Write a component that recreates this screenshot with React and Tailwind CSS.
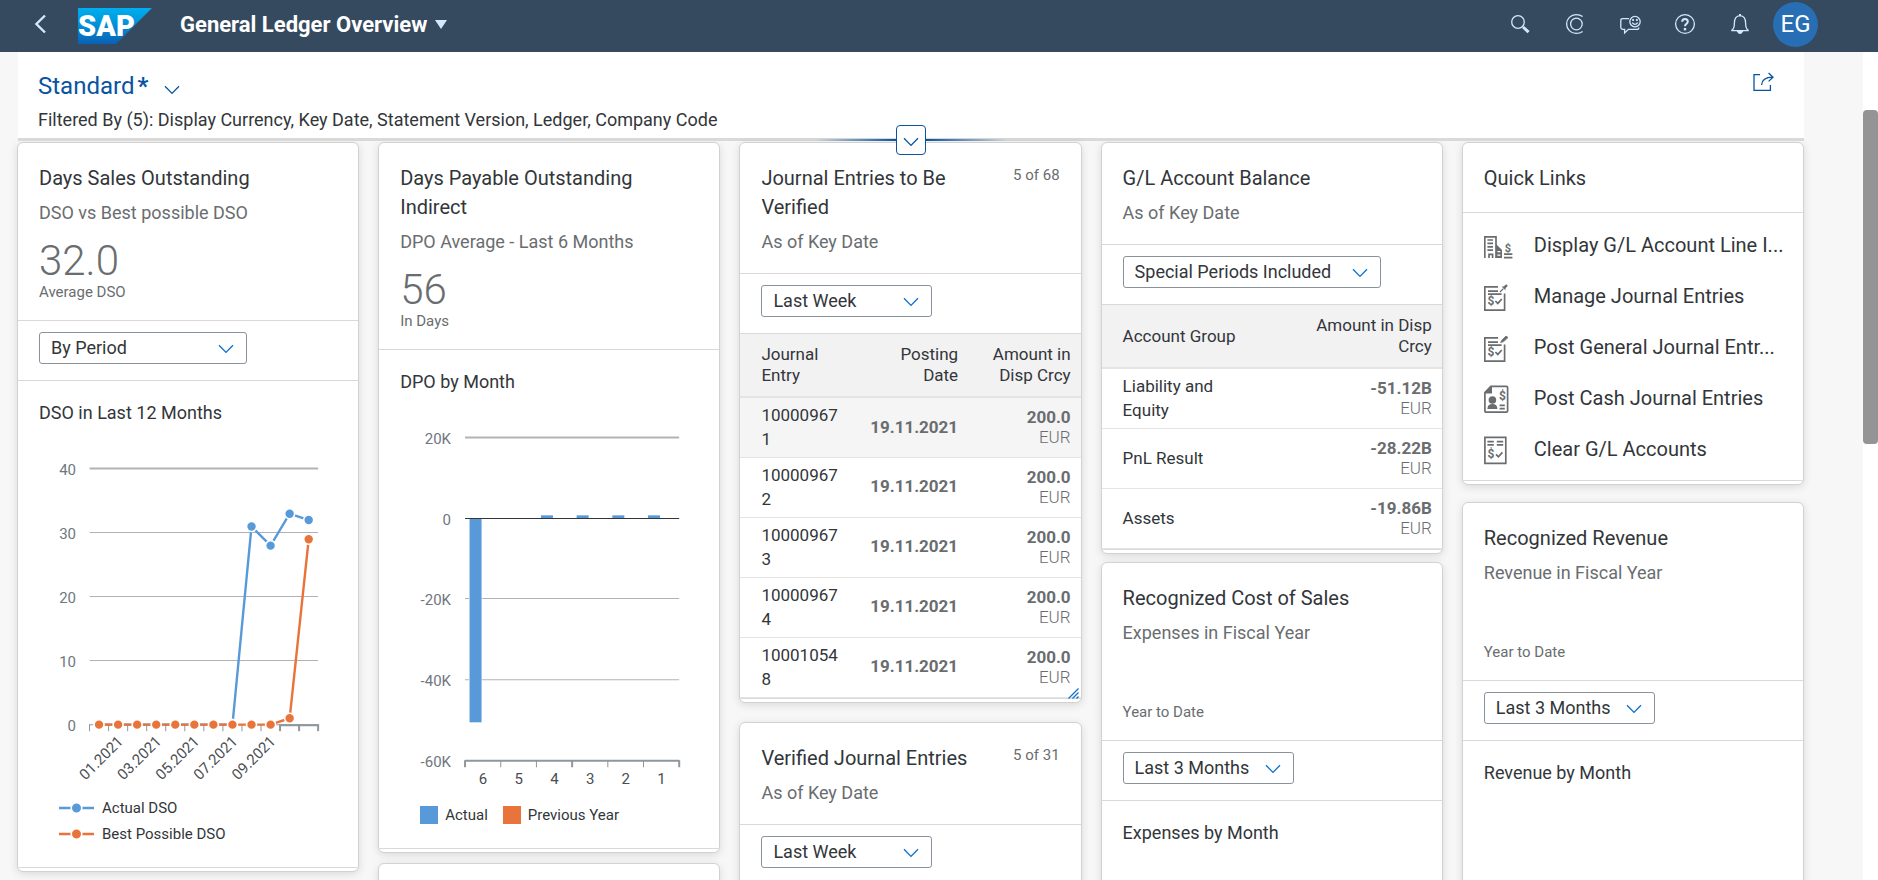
import React from 'react';

const BLUE = "#5899DA";
const ORANGE = "#E8743B";

const Chevron = ({ className }) => (
    <svg viewBox="0 0 16 10" className={className} fill="none" stroke="currentColor" strokeWidth="1.3" aria-hidden="true">
        <path d="M1 1.2 8 8.4 15 1.2" />
    </svg>
);

// --- Shell bar ---
const SapLogo = () => (
    <svg width="74" height="36" viewBox="0 0 74 36" role="img" aria-label="SAP">
        <defs>
            <linearGradient id="sapBlue" x1="0" y1="0" x2="0" y2="1">
                <stop offset="0" stopColor="#00AEEF" />
                <stop offset="0.4" stopColor="#0096DC" />
                <stop offset="1" stopColor="#0A60B4" />
            </linearGradient>
        </defs>
        <path d="M0 0H74L38 36H0Z" fill="url(#sapBlue)" />
        <text x="0" y="28" fontFamily="Roboto, sans-serif" fontWeight="900" fontSize="29" fill="#fff">SAP</text>
    </svg>
);

const shellIcons = [
    {
        label: "Search",
        drawing: (
            <>
                <circle cx="8" cy="8" r="6.3" />
                <path d="M13 13 18.6 18.2" strokeWidth="3" />
            </>
        ),
    },
    {
        label: "CoPilot",
        drawing: (
            <>
                <path d="M17.6 2.6C15.6 1 13.4.6 11 .6A9.4 9.4 0 0 0 11 19.4C13.4 19.4 15.6 19 17.6 17.4" />
                <circle cx="11.4" cy="10" r="5.8" />
            </>
        ),
    },
    {
        label: "Feedback",
        drawing: (
            <>
                <path d="M9 4.6H2.6Q.8 4.6.8 6.4V13.6Q.8 15.4 2.6 15.4H4.6V19L8.4 15.4H17Q18.8 15.4 18.8 13.4" />
                <circle cx="15" cy="7.6" r="5.2" />
                <path d="M12.2 8.6Q15 12 17.8 8.6" />
                <path d="M13.1 5V7M16.9 5V7" strokeWidth="1.7" />
            </>
        ),
    },
    {
        label: "Help",
        drawing: (
            <>
                <circle cx="10" cy="10" r="9.4" />
                <path d="M7.2 7.8Q7.2 5 10 5T12.8 7.5Q12.8 9 11.4 9.9T10 12.2" strokeWidth="2" />
                <path d="M10 14V16.4" strokeWidth="2.4" />
            </>
        ),
    },
    {
        label: "Notifications",
        drawing: (
            <>
                <path d="M1.4 16.6Q4.4 15 4.4 9Q4.4 2 10 1.6Q15.6 2 15.6 9Q15.6 15 18.6 16.6Z" />
                <path d="M7.6 17.4Q10 21.4 12.4 17.4Z" fill="currentColor" />
                <path d="M10 0V2" strokeWidth="2" />
            </>
        ),
    },
];

const ShellBar = () => (
    <header className="flex h-[52px] shrink-0 items-center bg-[#354a5f] pb-1 pl-[34px] pr-[60px]">
        <button aria-label="Back" className="mr-8 text-[#d1e8ff]">
            <svg width="12" height="20" viewBox="0 0 12 20" fill="none" stroke="currentColor" strokeWidth="2.4">
                <path d="M11 1.5 2.4 10 11 18.5" />
            </svg>
        </button>
        <a href="#home" className="mt-1"><SapLogo /></a>
        <button className="ml-7 flex items-center gap-2 text-[22px] font-bold text-white">
            <h1>General Ledger Overview</h1>
            <svg width="12" height="9" viewBox="0 0 12 9" fill="#d1e8ff"><path d="M0 0H12L6 9Z" /></svg>
        </button>
        <nav className="ml-auto flex items-center gap-[35px] text-[#d1e8ff]">
            {shellIcons.map(({ label, drawing }) => (
                <button key={label} aria-label={label}>
                    <svg width="20" height="20" viewBox="0 0 20 20" className="overflow-visible" fill="none" stroke="currentColor" strokeWidth="1.3">
                        {drawing}
                    </svg>
                </button>
            ))}
            <button className="-ml-3 flex size-[45px] items-center justify-center rounded-full bg-[#286eb4] text-2xl text-white">EG</button>
        </nav>
    </header>
);

// --- Filter bar ---
const FilterBar = () => (
    <section className="relative flex h-[89px] items-start justify-between border-b-3 border-[#d9d9d9] bg-white pl-5 pr-[30px]">
        <div className="pt-[18px]">
            <button className="flex h-8 items-center text-2xl text-[#0854a0]">
                Standard<b className="ml-[3px]">*</b>
                <Chevron className="ml-4 mt-2 w-4" />
            </button>
            <p className="mt-1 text-lg leading-7 text-[#32363a]">
                Filtered By (5): Display Currency, Key Date, Statement Version, Ledger, Company Code
            </p>
        </div>
        <button aria-label="Share" className="mt-5 text-[#0854a0]">
            <svg width="21" height="20" viewBox="0 0 21 20" fill="none" stroke="currentColor" strokeWidth="1.3">
                <path d="M7 2.6H1V18.4H17.4V13" />
                <path d="M8.6 13Q9 5.4 19.4 5.2M15.6 1 20 5.2 15.6 9.4" />
            </svg>
        </button>
        <div className="absolute -bottom-[17px] left-1/2 z-10 flex -translate-x-1/2 items-center">
            <span className="h-[2px] w-20 bg-linear-to-r from-transparent to-[#0854a0]" />
            <button aria-label="Expand Header" className="flex size-[30px] items-center justify-center rounded border border-[#0854a0] bg-white text-[#0854a0]">
                <Chevron className="mt-1 w-4" />
            </button>
            <span className="h-[2px] w-20 bg-linear-to-l from-transparent to-[#0854a0]" />
        </div>
    </section>
);

// --- Card parts ---
const Card = ({ children }) => (
    <article className="overflow-hidden rounded-md border border-[#d2d2d2] bg-white shadow-[0_2px_8px_rgba(0,0,0,0.12)]">
        {children}
        <div className="h-1 border-t border-[#d9d9d9]" />
    </article>
);

const CardHeader = ({ title, subtitle, counter, value, unit }) => (
    <div className="border-b border-[#d9d9d9] px-[21px] pb-[19px] pt-[21px]">
        <div className="flex justify-between gap-8">
            <h2 className="text-xl leading-[29px] text-[#32363a]">{title}</h2>
            {counter && <span className="shrink-0 text-[15px] leading-[22px] text-[#6a6d70]">{counter}</span>}
        </div>
        {subtitle && <p className="mt-2 text-lg leading-6 text-[#6a6d70]">{subtitle}</p>}
        {unit && (
            <>
                <p className="mt-[14px] h-11 text-[42px] font-light leading-[44px] text-[#6a6d70]">{value}</p>
                <p className="text-[15px] leading-[18px] text-[#6a6d70]">{unit}</p>
            </>
        )}
    </div>
);

const FilterSelect = ({ label, value, width = "w-[171px]" }) => (
    <div className="border-b border-[#d9d9d9] px-[21px] pb-4 pt-[11px]">
        <div className={`relative ${width}`}>
            <select aria-label={label} className="block h-8 w-full appearance-none rounded-[3px] border border-[#89919a] bg-white pl-[11px] text-lg leading-6 text-[#32363a]">
                <option>{value}</option>
            </select>
            <Chevron className="pointer-events-none absolute right-[13px] top-3 w-4 text-[#0a6ed1]" />
        </div>
    </div>
);

const ChartTitle = ({ children }) => (
    <h3 className="px-[21px] pt-5 text-lg leading-6 text-[#32363a]">{children}</h3>
);

// --- Line chart: DSO in last 12 months ---
const actual = [0, 0, 0, 0, 0, 0, 0, 0, 31, 28, 33, 32];
const best = [0, 0, 0, 0, 0, 0, 0, 0, 0, 0, 1, 29];
const dsoX = (i) => 81 + i * 19.05;
const dsoY = (v) => 299.5 - v * 6.39;

const DsoSeries = ({ data, color }) => (
    <g>
        <polyline points={data.map((v, i) => `${dsoX(i)},${dsoY(v)}`).join(" ")} fill="none" stroke={color} strokeWidth="2.4" />
        {data.map((v, i) => (
            <circle key={i} cx={dsoX(i)} cy={dsoY(v)} r="5" fill={color} stroke="#fff" strokeWidth="1.6" />
        ))}
    </g>
);

const DsoChart = () => (
    <svg viewBox="0 0 340 366" className="w-full" fontFamily="Roboto, sans-serif" fontSize="15">
        {[40, 30, 20, 10, 0].map((v) => (
            <g key={v}>
                <path d={`M71.5 ${Math.round(dsoY(v)) - 0.5}H300`} stroke={v === 0 ? "#8e969e" : "#afb3b8"} strokeWidth={v === 40 ? 2 : 1} />
                <text x="58" y={dsoY(v) + 6} textAnchor="end" fill="#6f7780">{v}</text>
            </g>
        ))}
        {Array.from({ length: 13 }, (_, i) => (
            <path key={i} d={`M${71.5 + i * 19.04} 299V306`} stroke="#8e969e" strokeWidth={i > 9 ? 2 : 1} />
        ))}
        <path d="M262 300H300" stroke="#8e969e" strokeWidth="2" />
        {["01.2021", "03.2021", "05.2021", "07.2021", "09.2021"].map((m, i) => (
            <text key={m} transform={`translate(${106 + i * 38.1} 317) rotate(-45)`} textAnchor="end" fill="#4a4e52">{m}</text>
        ))}
        <DsoSeries data={actual} color={BLUE} />
        <DsoSeries data={best} color={ORANGE} />
    </svg>
);

const LineLegend = ({ color, label }) => (
    <li className="flex h-[26px] items-center gap-2">
        <svg width="35" height="12" viewBox="0 0 35 12">
            <path d="M0 6H35" stroke={color} strokeWidth="2.4" />
            <circle cx="17.5" cy="6" r="5.3" fill={color} stroke="#fff" strokeWidth="1.6" />
        </svg>
        {label}
    </li>
);

// --- Bar chart: DPO by month ---
const dpo = [["6", -50.4], ["5", 0], ["4", 0.8], ["3", 0.8], ["2", 0.8], ["1", 0.8]];
const dpoY = (v) => 124.5 - v * 4.04;

const DpoChart = () => (
    <svg viewBox="0 0 340 402" className="w-full" fontFamily="Roboto, sans-serif" fontSize="15">
        {[20, 0, -20, -40, -60].map((v) => (
            <g key={v}>
                {v !== 0 && <path d={`M86 ${Math.round(dpoY(v)) - 0.5}H300`} stroke={v === -60 ? "#8e969e" : "#afb3b8"} strokeWidth={Math.abs(v + 20) === 40 ? 2 : 1} />}
                <text x="72" y={dpoY(v) + 6} textAnchor="end" fill="#6f7780">{v === 0 ? "0" : `${v}K`}</text>
            </g>
        ))}
        {dpo.map(([month, v], i) => (
            <g key={month}>
                {v !== 0 && (
                    <rect x={90.5 + i * 35.67} y={Math.min(dpoY(0), dpoY(v))} width="12" height={Math.abs(v) * 4.04} fill={BLUE} stroke="#fff" strokeWidth="1" paintOrder="stroke" />
                )}
                <text x={104 + i * 35.67} y="390" textAnchor="middle" fill="#4a4e52">{month}</text>
            </g>
        ))}
        <path d="M86 124.5H300" stroke="#32363a" />
        {Array.from({ length: 7 }, (_, i) => (
            <path key={i} d={`M${86 + i * 35.67} 366V373`} stroke="#8e969e" strokeWidth={i % 3 === 0 ? 2 : 1} />
        ))}
    </svg>
);

// --- Tables ---
const Amount = ({ value }) => (
    <td className="pr-[10px] text-right leading-5 text-[#6a6d70]">
        <b>{value}</b>
        <br />
        <span className="font-light">EUR</span>
    </td>
);

const entries = ["100009671", "100009672", "100009673", "100009674", "100010548"];

const JournalTable = () => (
    <table className="w-full table-fixed border-collapse text-[17px] text-[#32363a]">
        <thead>
            <tr className="h-[63px] border-b-2 border-[#e4e4e4] bg-[#f2f2f2] leading-[21px] [&>th]:font-normal">
                <th className="w-[32%] pl-[21px] pr-6 text-left">Journal Entry</th>
                <th className="w-[32%] pl-10 text-right">Posting Date</th>
                <th className="pl-5 pr-[10px] text-right">Amount in Disp Crcy</th>
            </tr>
        </thead>
        <tbody>
            {entries.map((id, i) => (
                <tr key={id} className={`h-[60px] border-b border-[#e4e4e4] ${i === 0 ? "bg-[#f5f5f5]" : "bg-white"}`}>
                    <td className="break-all pl-[21px] pr-1 leading-6">{id}</td>
                    <td className="text-right font-bold text-[#6a6d70]">19.11.2021</td>
                    <Amount value="200.0" />
                </tr>
            ))}
        </tbody>
    </table>
);

const balances = [["Liability and Equity", "-51.12B"], ["PnL Result", "-28.22B"], ["Assets", "-19.86B"]];

const BalanceTable = () => (
    <table className="w-full table-fixed border-collapse text-[17px] text-[#32363a]">
        <thead>
            <tr className="h-[63px] border-b-2 border-[#e4e4e4] bg-[#f2f2f2] leading-[21px] [&>th]:font-normal">
                <th className="w-1/2 pl-[21px] text-left">Account Group</th>
                <th className="pl-8 pr-[10px] text-right">Amount in Disp Crcy</th>
            </tr>
        </thead>
        <tbody>
            {balances.map(([group, amount]) => (
                <tr key={group} className="h-[60px] border-b border-[#e4e4e4]">
                    <td className="pl-[21px] pr-10 leading-6">{group}</td>
                    <Amount value={amount} />
                </tr>
            ))}
        </tbody>
    </table>
);

// --- Quick links ---
const Dollar = ({ x, y, size = 11 }) => (
    <text x={x} y={y} fontFamily="Roboto, sans-serif" fontSize={size} fontWeight="700" fill="currentColor" stroke="none">$</text>
);

const BuildingIcon = () => (
    <>
        <path d="M.8 26V4.8H12V26M3.4 8H9M3.4 11.4H9M3.4 14.8H9M3.4 18.2H9M5 26V22.4H8.6V26" />
        <path d="M12 12 18 18V26H12Z" fill="currentColor" stroke="none" />
        <path d="M13.4 19.6H16.4M13.4 23.2H16.4" stroke="#fff" strokeWidth="1.2" />
        <path d="M20 22.2H28.4M20 25.6H28.4" />
        <Dollar x="20.8" y="20" />
    </>
);

const SheetIcon = ({ pen }) => (
    <>
        <path d="M14 3.8H.8V27.2H20.6V10.4M4 8.2H14M4 11.2H17.6" />
        <Dollar x="3.4" y="22" size="12" />
        <path d="m11.4 18 2.4 2.4 4-4.4" />
        {pen
            ? <path d="M16.6 8.6 18 6 22 2 24 3.6 19.6 7.6Z" fill="currentColor" strokeWidth="0.8" />
            : (
                <>
                    <path d="M16 9 19.4 5.6" strokeWidth="1.2" />
                    <path d="M17.6 3.6 21.6 7.6 21.4 5.4 23.8 2.8 22.2 1.2 19.6 3.6Z" fill="currentColor" stroke="none" />
                </>
            )}
    </>
);

const CashIcon = () => (
    <>
        <path d="M.9 7.6 6.8 1.4H22.4Q23.6 1.4 23.6 2.6V26Q23.6 27.2 22.4 27.2H2Q.9 27.2.9 26Z" />
        <path d="M.9 8.6V7.4L6.8 1.4H8V8.6Z" fill="currentColor" stroke="none" />
        <circle cx="8.4" cy="15" r="3.8" fill="currentColor" stroke="none" />
        <path d="M3.4 24Q3.4 19 8.4 19T13.4 24Z" fill="currentColor" stroke="none" />
        <Dollar x="15" y="15.4" size="12" />
        <path d="M15.6 20.4H20.8M15.6 23.6H20.8" />
    </>
);

const ClearIcon = () => (
    <>
        <path d="M.9 1.4H21.8V27.4H.9ZM3.4 5.6H9.8M3.4 8.8H9.8M12.8 5.6H19.2M12.8 8.8H19.2" />
        <Dollar x="3.4" y="22.4" size="12" />
        <path d="m12 18.4 2.4 2.4 4-4.4" />
    </>
);

const links = [
    ["Display G/L Account Line I...", <BuildingIcon />],
    ["Manage Journal Entries", <SheetIcon />],
    ["Post General Journal Entr...", <SheetIcon pen />],
    ["Post Cash Journal Entries", <CashIcon />],
    ["Clear G/L Accounts", <ClearIcon />],
];

const QuickLinks = () => (
    <ul className="pb-[6px] pl-[21px] pr-4 pt-[6px]">
        {links.map(([label, icon]) => (
            <li key={label}>
                <a href="#app" className="flex h-[51px] items-center gap-[21px] text-[#32363a]">
                    <svg width="29" height="29" viewBox="0 0 29 29" className="mt-1 shrink-0 text-[#6a6d70]" fill="none" stroke="currentColor" strokeWidth="1.7">
                        {icon}
                    </svg>
                    <span className="whitespace-nowrap text-xl">{label}</span>
                </a>
            </li>
        ))}
    </ul>
);

export default function App() {
    return (
        <div className="flex h-screen flex-col overflow-hidden bg-[#f7f7f7] font-[Roboto,sans-serif]">
            <ShellBar />
            <div className="flex min-h-0 flex-1">
                <main className="min-w-0 flex-1 overflow-hidden pl-[18px] pr-[59px]">
                    <FilterBar />
                    <div className="-ml-px mt-px grid grid-cols-5 items-start gap-[19px]">
                        <Card>
                            <CardHeader title="Days Sales Outstanding" subtitle="DSO vs Best possible DSO" value="32.0" unit="Average DSO" />
                            <FilterSelect label="View" value="By Period" width="w-[208px]" />
                            <ChartTitle>DSO in Last 12 Months</ChartTitle>
                            <DsoChart />
                            <ul className="px-[41px] pb-5 pt-1 text-[15px] text-[#32363a]">
                                <LineLegend color={BLUE} label="Actual DSO" />
                                <LineLegend color={ORANGE} label="Best Possible DSO" />
                            </ul>
                        </Card>

                        <div className="flex flex-col gap-[10px]">
                            <Card>
                                <CardHeader title="Days Payable Outstanding Indirect" subtitle="DPO Average - Last 6 Months" value="56" unit="In Days" />
                                <ChartTitle>DPO by Month</ChartTitle>
                                <DpoChart />
                                <ul className="flex gap-[15px] px-[41px] pb-[22px] pt-2 text-[15px] leading-[22px] text-[#32363a]">
                                    <li className="flex items-center gap-[7px]"><i className="size-[18px] bg-[#5899DA]" />Actual</li>
                                    <li className="flex items-center gap-[7px]"><i className="size-[18px] bg-[#E8743B]" />Previous Year</li>
                                </ul>
                            </Card>
                            <Card>
                                <div className="h-40" />
                            </Card>
                        </div>

                        <div className="flex flex-col gap-[19px]">
                            <div className="relative">
                                <Card>
                                    <CardHeader title="Journal Entries to Be Verified" subtitle="As of Key Date" counter="5 of 68" />
                                    <FilterSelect label="Period" value="Last Week" />
                                    <JournalTable />
                                </Card>
                                <svg width="11" height="11" viewBox="0 0 11 11" className="absolute bottom-1 right-[3px]" stroke="#0a6ed1" strokeWidth="1.2">
                                    <path d="M.5 10.5 10.5.5M4.5 10.5 10.5 4.5M8.5 10.5 10.5 8.5" />
                                </svg>
                            </div>
                            <Card>
                                <CardHeader title="Verified Journal Entries" subtitle="As of Key Date" counter="5 of 31" />
                                <FilterSelect label="Period" value="Last Week" />
                                <div className="h-64" />
                            </Card>
                        </div>

                        <div className="flex flex-col gap-2">
                            <Card>
                                <CardHeader title="G/L Account Balance" subtitle="As of Key Date" />
                                <FilterSelect label="Periods" value="Special Periods Included" width="w-[258px]" />
                                <BalanceTable />
                            </Card>
                            <Card>
                                <CardHeader title="Recognized Cost of Sales" subtitle="Expenses in Fiscal Year" unit="Year to Date" />
                                <FilterSelect label="Period" value="Last 3 Months" />
                                <ChartTitle>Expenses by Month</ChartTitle>
                                <div className="h-64" />
                            </Card>
                        </div>

                        <div className="flex flex-col gap-[17px]">
                            <Card>
                                <CardHeader title="Quick Links" />
                                <QuickLinks />
                            </Card>
                            <Card>
                                <CardHeader title="Recognized Revenue" subtitle="Revenue in Fiscal Year" unit="Year to Date" />
                                <FilterSelect label="Period" value="Last 3 Months" />
                                <ChartTitle>Revenue by Month</ChartTitle>
                                <div className="h-64" />
                            </Card>
                        </div>
                    </div>
                </main>
                <div className="w-[15px] shrink-0 bg-white pt-[58px]">
                    <div className="h-[334px] rounded bg-[#949494]" />
                </div>
            </div>
        </div>
    );
}
